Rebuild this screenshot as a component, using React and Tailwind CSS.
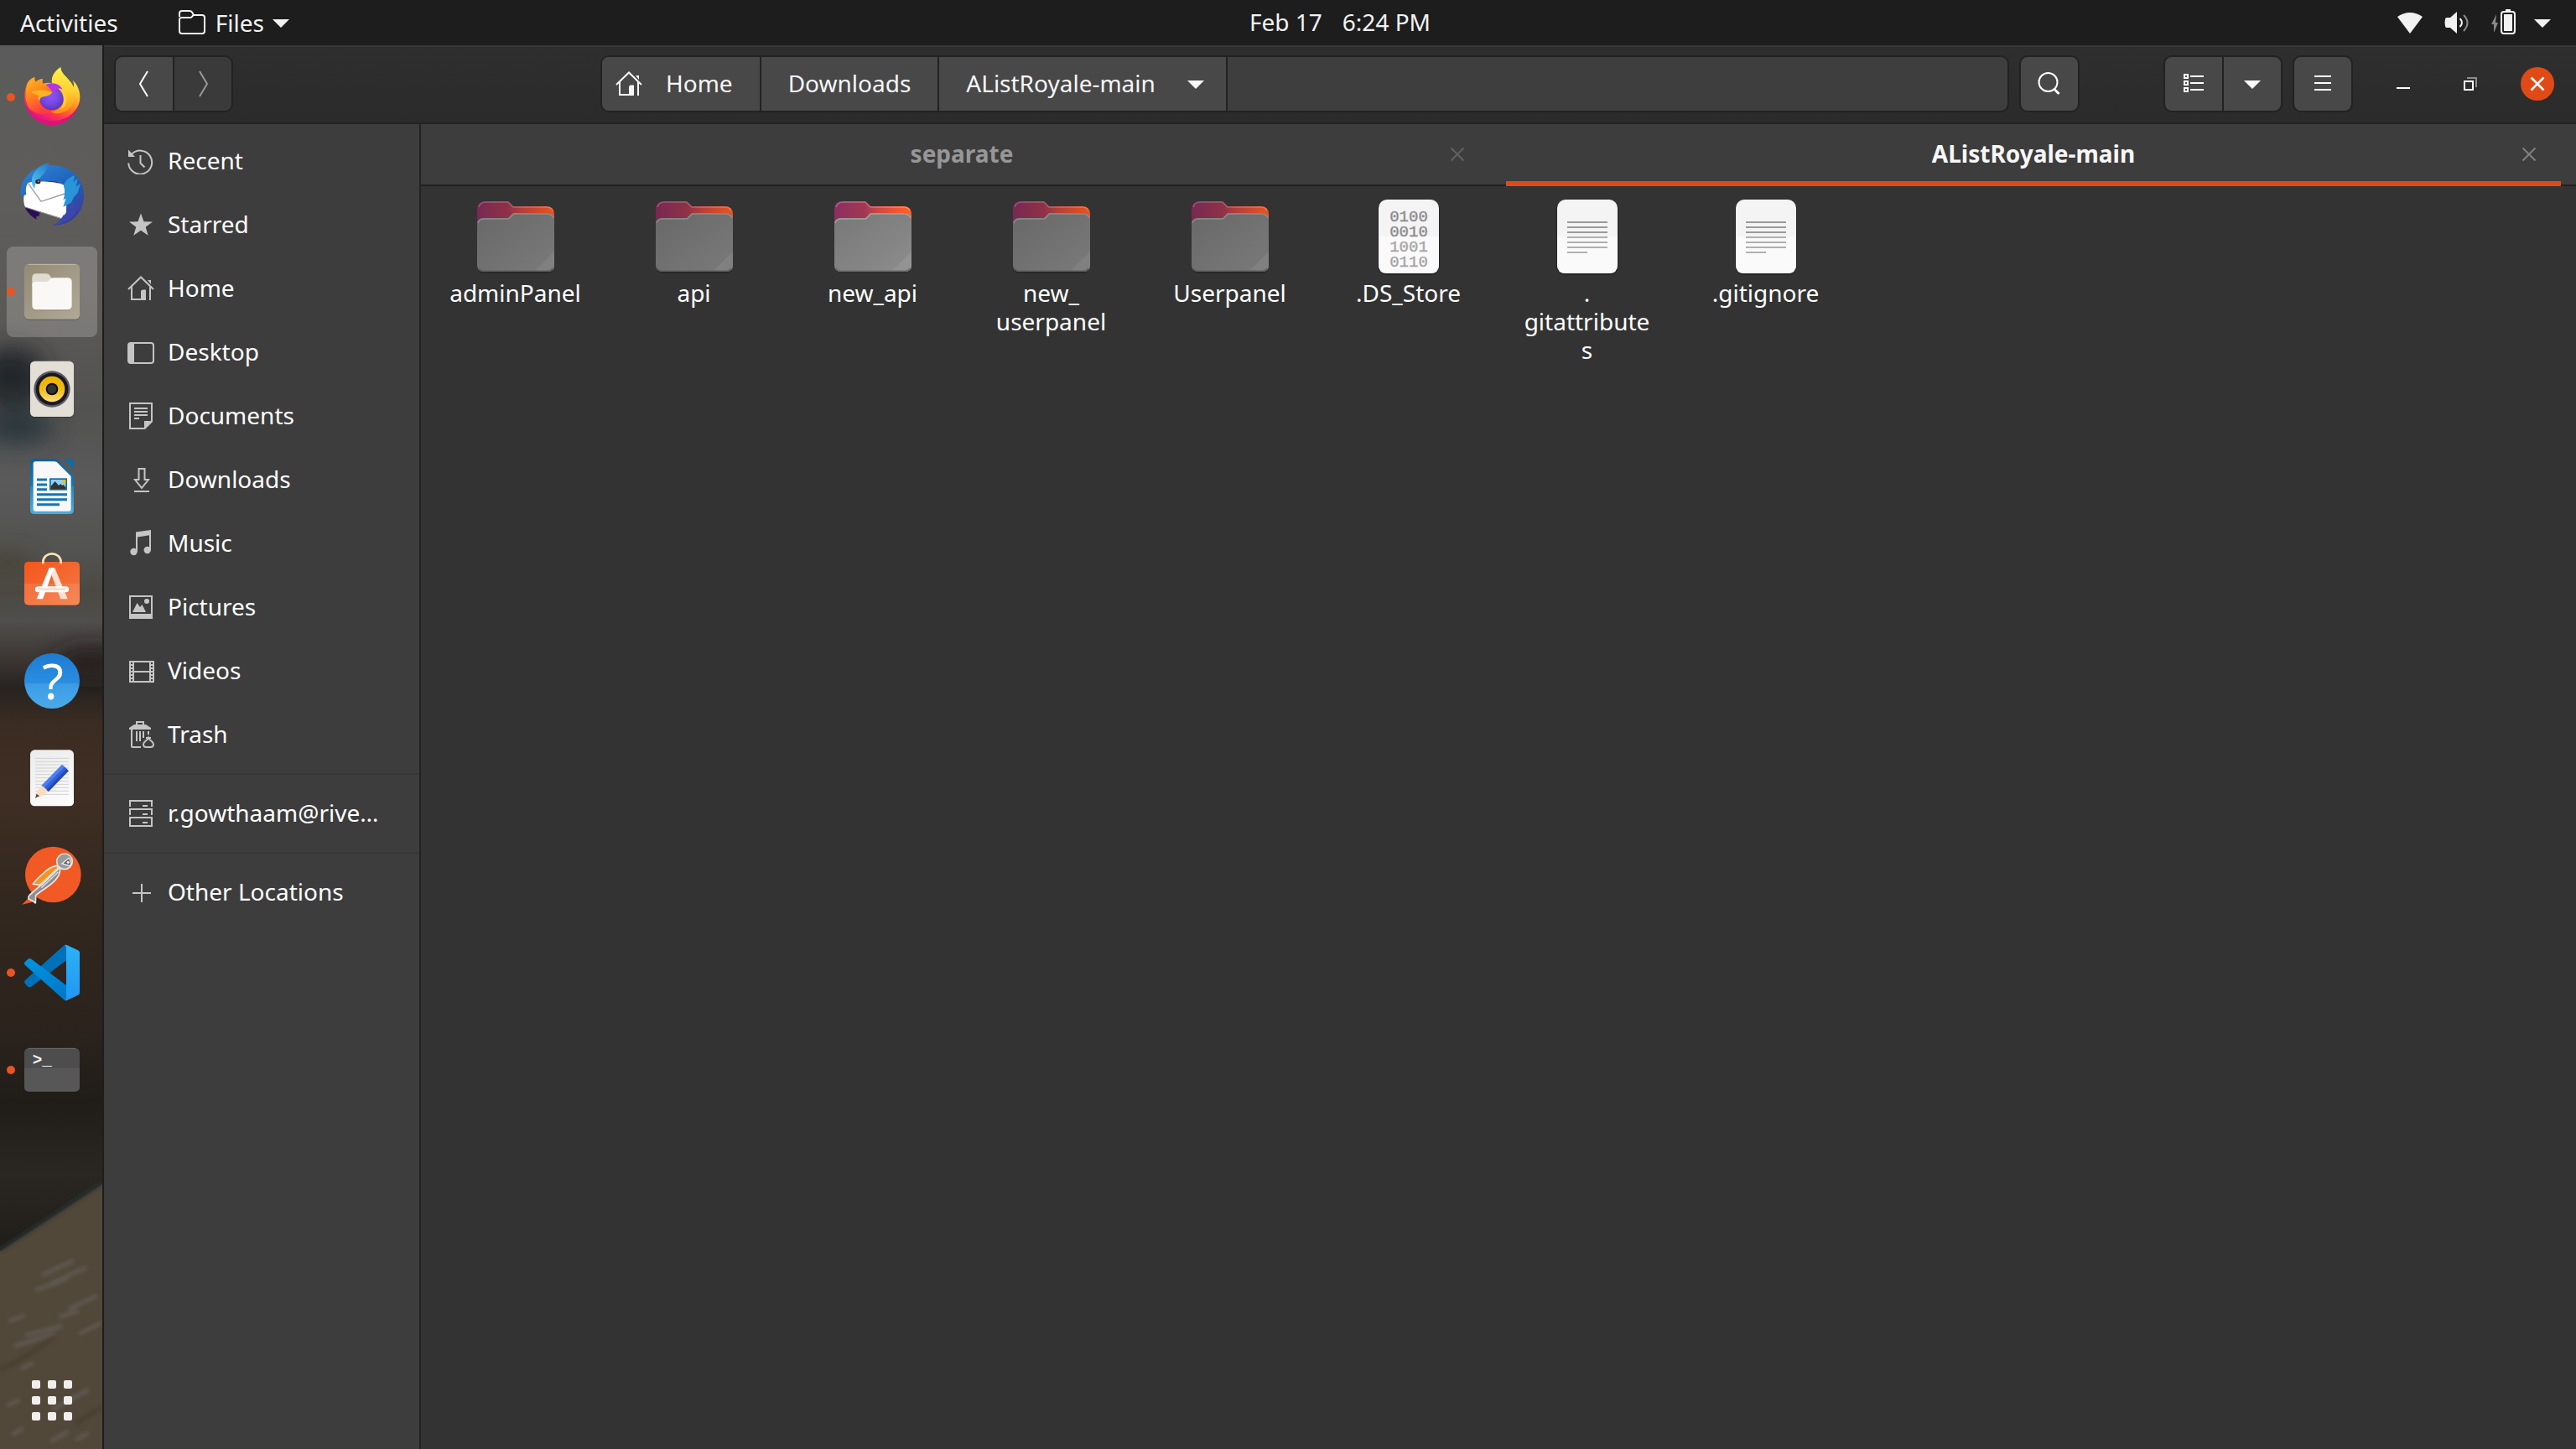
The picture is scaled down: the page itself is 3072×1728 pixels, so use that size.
import React from "react";

/* ---------- small symbolic icons (32px grid) ---------- */

function Sym({ children, className = "" }) {
  return (
    <svg viewBox="0 0 32 32" className={"size-8 shrink-0 " + className} fill="none" stroke="currentColor" strokeWidth="2" aria-hidden="true">
      {children}
    </svg>
  );
}

const HomeIcon = () => (
  <Sym>
    <path d="M1 17 16 2.500 31 17" />
    <path d="M5 14V29H17M27 13.500V30" />
    <path d="M16 30V20q0-2.500 2.500-2.500H22V30z" fill="currentColor" stroke="none" />
    <path d="M24 6h4v5z" fill="currentColor" stroke="none" />
  </Sym>
);

const Triangle = () => (
  <Sym>
    <path d="M6 12h20L16 22z" fill="currentColor" stroke="none" />
  </Sym>
);

const Cross = () => (
  <Sym>
    <path d="M8.500 8.500l15 15M23.500 8.500l-15 15" />
  </Sym>
);

const icons = {
  recent: (
    <Sym>
      <path d="M5 8A14 14 0 1 1 1.200 18.500M15.500 9v9.500l5 5" />
      <path d="M1 2.500 1 11h8z" fill="currentColor" stroke="none" />
    </Sym>
  ),
  starred: (
    <Sym>
      <path d="M16 2.500l3.500 9.700 10.500.3-8.300 6.300 3 10L16 22.800 7.300 28.800l3-10L2 12.500l10.500-.3z" fill="currentColor" stroke="none" />
    </Sym>
  ),
  home: <HomeIcon />,
  desktop: (
    <Sym>
      <rect x="1" y="5" width="30" height="24" rx="3" />
      <path d="M1 5h7v24H1z" fill="currentColor" stroke="none" />
    </Sym>
  ),
  documents: (
    <Sym>
      <path d="M29 23V1H3v30h18" />
      <path d="M20 22h10v1L21 32h-1z" fill="currentColor" stroke="none" />
      <path d="M8 7h16M8 11h16M8 15h16M8 19h6" />
    </Sym>
  ),
  downloads: (
    <Sym>
      <path d="M13.500 16V3h7v13h4.500L17 26 9 16zM8 30h18" />
    </Sym>
  ),
  music: (
    <Sym>
      <path d="M10 2.500 28 0V6L12 8.500V26h-2z" fill="currentColor" stroke="none" />
      <path d="M27 1v23" />
      <circle cx="7.500" cy="26" r="4.200" fill="currentColor" stroke="none" />
      <circle cx="23.700" cy="24" r="4.200" fill="currentColor" stroke="none" />
    </Sym>
  ),
  pictures: (
    <Sym>
      <path d="M3 3h26v22H3z" />
      <path d="M2 24h28v6H2zM6 22l5.500-11 3.500 5 2.500-3 4.500 9z" fill="currentColor" stroke="none" />
      <circle cx="23" cy="9" r="3" fill="currentColor" stroke="none" />
    </Sym>
  ),
  videos: (
    <Sym>
      <path d="M7 4v26M27 4v26M7 5h20M7 17h20M7 29h20M3 4v26M31 4v26" />
      <path d="M5 4v26M29 4v26" strokeDasharray="2 2" />
    </Sym>
  ),
  trash: (
    <Sym>
      <path d="M11 5V1h8v4M5 10v20q0 1 1 1h10M11 12v12M15 12v12M19 12v8M25 12v4M22 20h6" />
      <path d="M2 10V8l6-4h14l6 4v2z" fill="currentColor" stroke="none" />
      <path d="M25 20c-1 3-6 4-6 7.500 0 2 1.500 3.500 3.500 3.500h5c2 0 3.500-1.500 3.500-3.500 0-3.500-5-4.500-6-7.500z" />
    </Sym>
  ),
  server: (
    <Sym>
      <path d="M3 8V1h26v7M3 18v-7h26v7M3 21h26v10H3zM18 7h6M18 17h6M18 27h6" />
    </Sym>
  ),
  plus: (
    <Sym>
      <path d="M17 6v22M6 17h22" />
    </Sym>
  ),
};

/* ---------- dock artwork ---------- */

function Art({ top, children }) {
  return (
    <svg viewBox={`24 ${top} 324 324`} className="size-full" aria-hidden="true">
      {children}
    </svg>
  );
}

const Firefox = () => (
  <Art top={186}>
    <defs>
      <linearGradient id="ffBody" x1="0.85" y1="0.1" x2="0.25" y2="1">
        <stop offset="0" stopColor="#fff44f" />
        <stop offset="0.28" stopColor="#ffc52f" />
        <stop offset="0.52" stopColor="#ff7d1f" />
        <stop offset="0.76" stopColor="#ff3647" />
        <stop offset="0.95" stopColor="#e31587" />
      </linearGradient>
      <linearGradient id="ffFlame" x1="0.5" y1="0" x2="0.5" y2="1">
        <stop offset="0" stopColor="#fff04a" />
        <stop offset="0.5" stopColor="#ffd232" />
        <stop offset="1" stopColor="#ff8a16" />
      </linearGradient>
      <linearGradient id="ffHead" x1="0" y1="0" x2="0.4" y2="1">
        <stop offset="0" stopColor="#ffbd2a" />
        <stop offset="0.45" stopColor="#ff8c1a" />
        <stop offset="1" stopColor="#ff3d3d" />
      </linearGradient>
      <radialGradient id="ffGlobe" cx="0.45" cy="0.4" r="0.65">
        <stop offset="0" stopColor="#8a55f7" />
        <stop offset="0.5" stopColor="#7a48e6" />
        <stop offset="1" stopColor="#5335b2" />
      </radialGradient>
    </defs>
    <path fill="#e3107b" d="M90 370c10 45 50 78 97 78s88-35 98-84z" />
    <path fill="url(#ffBody)" d="M96 302c5-11 14-21 28-26-1 7 0 12 3 17 7-6 16-10 26-11-3 7-2 12 1 17 12-3 22-3 32-1-3-24 9-43 31-57 0 22 22 33 38 56 4 6 7 11 9 16 1-8 0-18-4-26 17 15 26 36 26 61 0 46-44 84-99 84s-100-36-100-80c0-18 3-35 9-50z" />
    <path fill="url(#ffFlame)" d="M186 298c-3-24 9-43 31-57 0 22 22 33 38 56 26 40 16 82-22 102-20 10-40 9-52 0 30-2 48-22 47-48-2-24-15-45-42-53z" />
    <circle cx="185" cy="350" r="44" fill="url(#ffGlobe)" />
    <path fill="#b833e1" d="M150 322c10-24 40-32 62-16 8 6 12 14 13 20-14-10-26-8-34 4-14-6-28-9-41-8z" />
    <path fill="#ffcc33" d="M208 317c13-4 25 8 29 24 5 22-3 44-22 52 10-12 14-28 12-43-2-14-8-25-19-33z" />
    <path fill="url(#ffHead)" d="M96 302c5-11 14-21 28-26-1 7 0 12 3 17 7-6 16-10 26-11-3 7-2 12 1 17 16 6 26 17 33 30-8 9-22 14-36 17-10 6-12 20-4 32 9 13 24 19 40 15-17 20-52 19-73 3-22-17-28-52-18-94z" />
    <path fill="#ffb424" d="M112 328c14-5 38-7 56-4 8 2 15 4 19 6-6 11-20 14-36 17-6 2-10 8-11 15-5-8-5-15-1-21-10-1-21-5-27-13z" />
  </Art>
);

const Thunderbird = () => (
  <Art top={534}>
    <defs>
      <linearGradient id="tbBody" x1="0.1" y1="0" x2="0.7" y2="1">
        <stop offset="0" stopColor="#2f86d6" />
        <stop offset="0.5" stopColor="#1f62bd" />
        <stop offset="1" stopColor="#3a3c9c" />
      </linearGradient>
      <linearGradient id="tbHead" x1="0.8" y1="0" x2="0.2" y2="1">
        <stop offset="0" stopColor="#2480cf" />
        <stop offset="1" stopColor="#55c4ee" />
      </linearGradient>
    </defs>
    <path fill="url(#tbBody)" d="M72 700c0-52 30-92 76-104 12-12 22-12 28-5 70-4 124 44 124 108 0 60-42 108-112 107 20-8 30-16 36-26l14-84z" />
    <path fill="#2a0d57" d="M88 738l56 24-6 8 8 2-16 2v11c-18-10-34-26-42-47z" />
    <path fill="#3a1c81" d="M150 656c26-14 60-10 78 10l-14 14z" />
    <path fill="#fff" d="M100 654c20-8 110-6 128 8 6 18 0 36 10 54l-1 44-16 23-131-42c-6-14-6-30-4-42l8-3c-4-18 0-32 6-42z" />
    <path fill="none" stroke="#9b9b9b" strokeWidth="4" d="M101 656l46 65 84-28" />
    <path fill="none" stroke="#8a8a8a" strokeWidth="3" d="M90 741l131 41" />
    <path fill="#2a94d8" d="M228 662c8-22 24-28 40-36l-6 26 16-14-6 30 16-12-10 34-14 16-10 20-28 14 10-32-10 8c6-18 8-36 2-54z" />
    <path fill="#3b47ab" d="M246 738l18-14 2 20 20-18c-12 44-48 78-98 80 18-6 32-22 38-36l10-3 2-18z" />
    <path fill="url(#tbHead)" d="M176 584c-8 14-8 26-22 40-12 16-28 20-30 52-12-12-14-36-4-54 12-20 30-36 56-38z" />
    <ellipse cx="136" cy="650" rx="9" ry="8" fill="#1d1a2a" />
    <circle cx="138" cy="649" r="4" fill="#a8702a" />
  </Art>
);

const FilesApp = () => (
  <Art top={882}>
    <defs>
      <linearGradient id="flBg" x1="0" y1="0" x2="1" y2="1">
        <stop offset="0" stopColor="#948b76" />
        <stop offset="1" stopColor="#b0a996" />
      </linearGradient>
    </defs>
    <rect x="87" y="947" width="198" height="198" rx="14" fill="#00000040" />
    <rect x="87" y="945" width="198" height="197" rx="14" fill="url(#flBg)" />
    <path d="M101 946h170" stroke="#c4beae" strokeWidth="3" />
    <path fill="#8a816c" opacity="0.5" d="M115 996q0-16 16-16h36q8 0 12 6l7 9h56q15 0 15 15v84q0 18-18 18h-106q-18 0-18-18z" />
    <path fill="#dfdbd0" d="M115 994q0-15 16-15h34q8 0 12 5l10 14-20 26h-52z" />
    <path fill="#f9f8f6" d="M115 1020q0-12 12-12h37q8 0 12-5l3-4q4-5 11-5h52q15 0 15 15v84q0 15-15 15H130q-15 0-15-15z" />
  </Art>
);

const Rhythmbox = () => (
  <Art top={30}>
    <defs>
      <linearGradient id="rbCone" x1="0" y1="0" x2="0" y2="1">
        <stop offset="0" stopColor="#ecb300" />
        <stop offset="0.5" stopColor="#eebc12" />
        <stop offset="1" stopColor="#fbe07a" />
      </linearGradient>
    </defs>
    <rect x="108" y="95" width="156" height="199" rx="16" fill="#00000050" />
    <rect x="108" y="92" width="156" height="199" rx="16" fill="#e3dfd6" />
    <circle cx="186" cy="192" r="65" fill="#5a5a60" />
    <circle cx="186" cy="192" r="58" fill="#1b1826" />
    <circle cx="186" cy="192" r="46" fill="url(#rbCone)" />
    <circle cx="186" cy="192" r="22" fill="#0c0c0c" />
    <circle cx="186" cy="192" r="16" fill="#333" />
  </Art>
);

const Writer = () => (
  <Art top={378}>
    <defs>
      <linearGradient id="lwBg" x1="0" y1="0" x2="0" y2="1">
        <stop offset="0" stopColor="#0f6199" />
        <stop offset="0.5" stopColor="#1679b4" />
        <stop offset="0.5" stopColor="#2488c2" />
        <stop offset="1" stopColor="#4aaede" />
      </linearGradient>
    </defs>
    <path fill="url(#lwBg)" d="M108 457q0-16 16-16h78l62 62v120q0 16-16 16H124q-16 0-16-16z" />
    <path fill="#f8f8f8" d="M119 459q0-8 8-8h68l8 2 51 51v117q0 8-8 8H127q-8 0-8-8z" />
    <path fill="#126aa4" d="M226 441h24q14 0 14 14v26z" />
    <path stroke="#0f76bb" strokeWidth="9" d="M132 516h36M132 534h36M132 551h36M132 569h108M132 587h108M132 605h81" />
    <rect x="177" y="511" width="63" height="43" fill="#0c6aa8" />
    <rect x="182" y="516" width="53" height="35" fill="#8fd0f5" />
    <path fill="#f4c01c" d="M221 516h14v13q-12 0-14-13z" />
    <path fill="#333" d="M182 551v-12l15-17 13 15 7-6 5 6 5-3 8 10v7z" />
  </Art>
);

const Software = () => (
  <Art top={726}>
    <defs>
      <linearGradient id="swBg" x1="0" y1="0" x2="1" y2="1">
        <stop offset="0" stopColor="#f4561c" />
        <stop offset="1" stopColor="#f37a44" />
      </linearGradient>
    </defs>
    <rect x="87" y="812" width="198" height="155" rx="14" fill="#00000050" />
    <rect x="87" y="810" width="198" height="155" rx="14" fill="url(#swBg)" />
    <path fill="#fff" opacity="0.1" d="M87 888h198v63q0 14-14 14H101q-14 0-14-14z" />
    <path fill="none" stroke="#fde3b0" strokeWidth="8" strokeLinecap="round" d="M154 814v-6c2-17 16-27 32-27s30 10 32 27v6" />
    <path fill="#fce2d6" d="M176 832h20l46 111h-25l-31-82z" />
    <path fill="#fff" d="M176 832h18l-41 111h-22z" />
    <path stroke="#fff" strokeWidth="21" strokeLinecap="round" d="M136 908h100" />
    <path stroke="#fcdccd" strokeWidth="8" d="M136 908h98" />
  </Art>
);

const Help = () => (
  <Art top={1074}>
    <defs>
      <linearGradient id="hpBg" x1="0" y1="0" x2="0" y2="1">
        <stop offset="0" stopColor="#1c7cd2" />
        <stop offset="0.55" stopColor="#2a8ee0" />
        <stop offset="0.55" stopColor="#3b9ce6" />
        <stop offset="1" stopColor="#4aaae9" />
      </linearGradient>
    </defs>
    <circle cx="186" cy="1236" r="99" fill="url(#hpBg)" />
    <text x="189" y="1302" textAnchor="middle" fontSize="176" fill="#fff" className="font-['Noto_Sans',sans-serif]">?</text>
  </Art>
);

const Gedit = () => (
  <Art top={222}>
    <defs>
      <linearGradient id="gdBg" x1="0" y1="0" x2="0.4" y2="1">
        <stop offset="0" stopColor="#ebebeb" />
        <stop offset="1" stopColor="#fafafa" />
      </linearGradient>
    </defs>
    <rect x="108" y="283" width="156" height="201" rx="16" fill="url(#gdBg)" />
    <path fill="#fff" d="M264 442v26q0 15-15 15h-27z" />
    <path stroke="#d2d2d2" strokeWidth="3" d="M126 313h120M126 325h120M126 336h120M126 348h120M126 359h120M126 371h120M126 383h120M126 395h120M126 406h120M126 418h120M126 430h120M126 442h120" />
    <path fill="#fbdcbf" d="M150 408l24 24-36 22-12-12z" />
    <path fill="#4c7ff0" d="M222 335l8 7-70 76-12-8z" />
    <path fill="#2f63de" d="M230 342l10 9-70 76-12-9z" />
    <path fill="#2348b8" d="M238 350l8 8-72 74-8-6z" />
    <path fill="#484848" d="M131 440l10 8-15 7z" />
  </Art>
);

const Postman = () => (
  <Art top={570}>
    <circle cx="190" cy="729" r="100" fill="#f15a24" />
    <path fill="#f15a24" d="M79 836l28-28 22 16z" />
    <path fill="#8e8e8e" stroke="#e6e6e6" strokeWidth="5" strokeLinejoin="round" d="M214 703c4 18-4 32-16 46-18 20-46 34-70 54l-1 28-10-8-14-6q-4-8 4-16l48-42z" />
    <path fill="#f7931e" stroke="#e6e6e6" strokeWidth="5" strokeLinejoin="round" d="M210 697c-14 0-28 4-42 16-20 18-40 34-50 50l30 4 56-54z" />
    <path fill="none" stroke="#e0e0e0" strokeWidth="4" d="M142 766l62-58M148 776l60-56" />
    <circle cx="231" cy="682" r="28" fill="#9a9a9a" stroke="#e2e2e2" strokeWidth="5" />
    <path fill="#5c5c5c" stroke="#f0f0f0" strokeWidth="4" d="M222 690l24-20q12 12 6 28z" />
    <circle cx="244" cy="685" r="5" fill="#f0f0f0" />
  </Art>
);

const VSCode = () => (
  <Art top={918}>
    <defs>
      <linearGradient id="vsR" x1="0" y1="0" x2="0" y2="1">
        <stop offset="0" stopColor="#2bb3f6" />
        <stop offset="1" stopColor="#2196f3" />
      </linearGradient>
      <linearGradient id="vsF" x1="0" y1="0" x2="0.4" y2="1">
        <stop offset="0" stopColor="#0095e0" />
        <stop offset="1" stopColor="#007acc" />
      </linearGradient>
    </defs>
    <path fill="#0071b8" d="M90 1107q-6 6 0 12l10 11q6 4 12 0l125-94v-56q-6 0-10 4z" />
    <path fill="url(#vsF)" d="M90 1053q-6-6 0-12l10-10q6-4 12 0l125 94v54q-6 0-10-4z" />
    <path fill="url(#vsR)" d="M233 981q2-1 6 0l40 19q6 3 6 9v142q0 6-6 9l-40 19q-4 1-6 0l4-8v-182z" />
  </Art>
);

const Terminal = () => (
  <Art top={1266}>
    <rect x="87" y="1353" width="198" height="154" rx="16" fill="#00000060" />
    <rect x="87" y="1350" width="198" height="155" rx="16" fill="#4d4d4d" />
    <path fill="#575757" d="M87 1421h198v68q0 16-16 16H103q-16 0-16-16z" />
    <path d="M101 1351h170" stroke="#6d6d6d" strokeWidth="3" />
    <text x="116" y="1410" fontSize="58" fontWeight="700" fill="#f2f2f2" className="font-['Liberation_Mono',monospace]">&gt;_</text>
  </Art>
);

const AppGrid = () => (
  <Art top={948}>
    {[1053, 1110, 1167].map((y) =>
      [129, 186, 243].map((x) => <rect key={x + "-" + y} x={x - 15} y={y - 15} width="30" height="30" rx="6" fill="#f0efed" />)
    )}
  </Art>
);

const dockApps = [
  { name: "Firefox", art: <Firefox />, running: true },
  { name: "Thunderbird Mail", art: <Thunderbird /> },
  { name: "Files", art: <FilesApp />, running: true, active: true },
  { name: "Rhythmbox", art: <Rhythmbox /> },
  { name: "LibreOffice Writer", art: <Writer /> },
  { name: "Ubuntu Software", art: <Software /> },
  { name: "Help", art: <Help /> },
  { name: "Text Editor", art: <Gedit /> },
  { name: "Postman", art: <Postman /> },
  { name: "Visual Studio Code", art: <VSCode />, running: true },
  { name: "Terminal", art: <Terminal />, running: true },
];

function DockButton({ name, art, running, active }) {
  return (
    <button type="button" aria-label={name} className={"relative size-[108px] shrink-0 rounded-lg " + (active ? "bg-white/20" : "")}>
      {art}
      {running && <span className="absolute left-0 top-[49px] size-[10px] rounded-full bg-[#e95420]" />}
    </button>
  );
}

const Wallpaper = () => (
  <svg viewBox="0 54 122 1674" preserveAspectRatio="none" className="absolute inset-0 size-full" aria-hidden="true">
    <defs>
      <linearGradient id="wall" gradientUnits="userSpaceOnUse" x1="0" y1="54" x2="0" y2="1500">
        <stop offset="0" stopColor="#5a5b5a" />
        <stop offset="0.13" stopColor="#5f5d5b" />
        <stop offset="0.22" stopColor="#5b5956" />
        <stop offset="0.3" stopColor="#525251" />
        <stop offset="0.36" stopColor="#5a5a5a" />
        <stop offset="0.42" stopColor="#525251" />
        <stop offset="0.45" stopColor="#4c4943" />
        <stop offset="0.475" stopColor="#4f4e4c" />
        <stop offset="0.505" stopColor="#3d3734" />
        <stop offset="0.53" stopColor="#272320" />
        <stop offset="0.56" stopColor="#3b2c22" />
        <stop offset="0.62" stopColor="#3f2e23" />
        <stop offset="0.7" stopColor="#33281f" />
        <stop offset="0.82" stopColor="#2a221c" />
        <stop offset="0.87" stopColor="#201d19" />
        <stop offset="0.93" stopColor="#2a2723" />
        <stop offset="1" stopColor="#1f1d18" />
      </linearGradient>
      <filter id="soft" x="-50%" y="-50%" width="200%" height="200%">
        <feGaussianBlur stdDeviation="14" />
      </filter>
      <filter id="faint" x="-50%" y="-50%" width="200%" height="200%">
        <feGaussianBlur stdDeviation="2" />
      </filter>
    </defs>
    <rect x="0" y="54" width="122" height="1674" fill="url(#wall)" />
    <g filter="url(#soft)">
      <ellipse cx="14" cy="450" rx="42" ry="36" fill="#20282a" />
      <ellipse cx="20" cy="510" rx="44" ry="18" fill="#25343b" />
      <ellipse cx="10" cy="672" rx="30" ry="12" fill="#453f2e" />
      <ellipse cx="110" cy="790" rx="46" ry="16" fill="#231f1c" />
    </g>
    <path d="M0 1492 122 1412V1728H0z" fill="#51483a" />
    <path d="M0 1491 122 1411" stroke="#2b3330" strokeWidth="4" filter="url(#faint)" />
    <g stroke="#6a6360" strokeWidth="5" strokeLinecap="round" opacity="0.6" filter="url(#faint)">
      <path d="M52 1520l34-16M62 1530l40-18M44 1538l34-12M84 1560l30-14M72 1570l20-6M12 1575l16-6M32 1592l40-10M18 1605l46-14M96 1590l24-12M26 1632l12-6M64 1680l40-22M10 1676l12-6M16 1710l10-6M62 1718l18-10M92 1716l12-6" />
    </g>
    <path d="M0 1634l30-16 36-24M90 1698l32-20" stroke="#43382b" strokeWidth="6" fill="none" opacity="0.5" filter="url(#faint)" />
  </svg>
);

/* ---------- file icons ---------- */

const FolderIcon = ({ bright }) => (
  <svg viewBox="0 0 96 96" className={"size-24 " + (bright ? "brightness-115" : "")} aria-hidden="true">
    <defs>
      <linearGradient id="fdBack" x1="0" y1="0" x2="1" y2="0">
        <stop offset="0" stopColor="#772953" />
        <stop offset="0.4" stopColor="#8f3148" />
        <stop offset="0.6" stopColor="#b84038" />
        <stop offset="1" stopColor="#e95420" />
      </linearGradient>
      <linearGradient id="fdFront" x1="0" y1="0" x2="1" y2="1">
        <stop offset="0" stopColor="#686868" />
        <stop offset="1" stopColor="#7a7a7a" />
      </linearGradient>
    </defs>
    <rect x="2" y="32" width="92" height="60" rx="8" fill="#2a2a2a" />
    <path fill="url(#fdBack)" d="M2 36V16Q2 6 11 6H39l6 6H85q9 0 9 10v20z" />
    <path fill="none" stroke="#fff" strokeOpacity="0.22" strokeWidth="1.500" d="M4 13q2-6 8-6H39l6 6H85q5 0 7 4" />
    <path fill="url(#fdFront)" d="M2 34q0-8 8-8H39l6-6H85q9 0 9 9V82q0 8-8 8H10q-8 0-8-8z" />
    <path fill="#808080" d="M94 66V82q0 8-8 8H70z" />
    <path fill="none" stroke="#8c8c8c" strokeWidth="1.500" d="M3 32q1-5 7-5H39.500l6-6H85q6 0 8 5" />
    <path fill="none" stroke="#5c5c5c" strokeWidth="1.500" d="M4 86q2 3.300 6 3.300H86q4 0 6-3.300" />
  </svg>
);

const PageIcon = ({ children }) => (
  <svg viewBox="0 0 96 96" className="size-24" aria-hidden="true">
    <rect x="11" y="5" width="74" height="89" rx="11" fill="#262626" />
    <rect x="12" y="4" width="72" height="88" rx="10" fill="#f4f4f4" />
    <path fill="#fafafa" d="M12 48h72v34q0 10-10 10H22q-10 0-10-10z" />
    {children}
  </svg>
);

const TextIcon = () => (
  <PageIcon>
    <path stroke="#9a9a9a" strokeWidth="2" d="M24 31h48M24 37h48M24 43h48" />
    <path stroke="#b0b0b0" strokeWidth="2" d="M24 49h48M24 55h48M24 61h48M24 67h24" />
  </PageIcon>
);

const BinaryIcon = () => (
  <PageIcon>
    <g fontSize="19" textAnchor="middle" strokeWidth="0.4" className="font-['Liberation_Mono',monospace]">
      <text x="48" y="30" fill="#8c8c8c" stroke="#8c8c8c">0100</text>
      <text x="48" y="48" fill="#8c8c8c" stroke="#8c8c8c">0010</text>
      <text x="48" y="66" fill="#a6a6a6" stroke="#a6a6a6">1001</text>
      <text x="48" y="84" fill="#a6a6a6" stroke="#a6a6a6">0110</text>
    </g>
  </PageIcon>
);

const files = [
  { lines: ["adminPanel"], icon: <FolderIcon /> },
  { lines: ["api"], icon: <FolderIcon /> },
  { lines: ["new_api"], icon: <FolderIcon bright /> },
  { lines: ["new_", "userpanel"], icon: <FolderIcon /> },
  { lines: ["Userpanel"], icon: <FolderIcon /> },
  { lines: [".DS_Store"], icon: <BinaryIcon /> },
  { lines: [".", "gitattribute", "s"], icon: <TextIcon /> },
  { lines: [".gitignore"], icon: <TextIcon /> },
];

/* ---------- chrome ---------- */

function TopBar() {
  return (
    <header className="flex h-[54px] shrink-0 items-center bg-[#1d1d1d] px-6 text-[#f2f2f2]">
      <div className="flex flex-1 basis-0 items-center">
        <button type="button">Activities</button>
        <button type="button" className="ml-[72px] flex items-center">
          <Sym>
            <path d="M1 9V5q0-3 3-3h9q2 0 3 1.500L18 7h10q3 0 3 3v16q0 3-3 3H4q-3 0-3-3V12q0-2 3-2h9.500q1.500 0 2.500-1.200L18 6.500" />
          </Sym>
          <span className="ml-3">Files</span>
          <span className="ml-1 text-[#f2f2f2]"><Triangle /></span>
        </button>
      </div>
      <button type="button" className="flex gap-6 pb-0.5 pl-[124px]">
        <span>Feb 17</span>
        <span>6:24 PM</span>
      </button>
      <div className="flex flex-1 basis-0 justify-end">
        <button type="button" aria-label="System menu" className="flex items-center gap-6">
          <Sym>
            <path d="M1 9Q16-1 31 9L16 29z" fill="currentColor" stroke="none" />
          </Sym>
          <Sym>
            <path d="M2 12q0-2 2-2h4l8-7v26l-8-7H4q-2 0-2-2-1-4 0-8z" fill="currentColor" stroke="none" />
            <path d="M19.500 11q5 5 0 10" />
            <path d="M24 7q9 9 0 19" stroke="#8a8a8a" />
          </Sym>
          <span className="flex items-center">
            <Sym>
              <path d="M7 6 1 18h3L4 28 9 16H6z" fill="#8a8a8a" stroke="none" />
              <rect x="13" y="3" width="16" height="26" rx="3" />
              <path d="M18 0h6v3h-6zM16 6h10v20H16z" fill="currentColor" stroke="none" />
            </Sym>
            <span className="ml-[14px]"><Triangle /></span>
          </span>
        </button>
      </div>
    </header>
  );
}

const box = "border-2 border-[#222222] bg-[#484848] text-white";
const center = "flex items-center justify-center";

function HeaderBar() {
  return (
    <div className="flex h-[94px] shrink-0 items-start border-y-2 border-t-[#383838] border-b-[#222222] bg-linear-to-b from-[#2e2e2e] to-[#2b2b2b] pt-[10px] pr-[26px] pl-3">
      <div className="mr-[438px] flex h-[68px] shrink-0">
        <button type="button" aria-label="Back" className={"w-[72px] rounded-l-[10px] " + center + " " + box}>
          <Sym><path d="M20 1 11 16l9 15" /></Sym>
        </button>
        <button type="button" aria-label="Forward" disabled className={"w-[70px] rounded-r-[10px] border-2 border-l-0 border-[#222222] bg-[#3a3a3a] text-[#999999] " + center}>
          <Sym><path d="M12 1l9 15-9 15" /></Sym>
        </button>
      </div>

      <nav aria-label="Path" className="flex h-[68px] min-w-0 flex-1 overflow-hidden rounded-[10px] border-2 border-[#222222] bg-[#3e3e3e] text-[#f7f7f7]">
        <button type="button" className="flex items-center gap-7 border-r-2 border-[#222222] bg-[#484848] pr-8 pl-4">
          <HomeIcon />
          <span className="pb-0.5">Home</span>
        </button>
        <button type="button" className="border-r-2 border-[#222222] bg-[#484848] px-8 pb-0.5">Downloads</button>
        <button type="button" className="flex items-center gap-8 border-r-2 border-[#222222] bg-[#484848] pr-5 pl-8">
          <span className="pb-0.5">AListRoyale-main</span>
          <Triangle />
        </button>
      </nav>

      <button type="button" aria-label="Search" className={"ml-3 h-[68px] w-[72px] shrink-0 rounded-[10px] " + center + " " + box}>
        <Sym>
          <circle cx="14.500" cy="14" r="11" />
          <path d="M21.500 22l6 6" strokeWidth="3" />
        </Sym>
      </button>

      <div className="ml-[100px] flex h-[68px] shrink-0">
        <button type="button" aria-label="List view" className={"w-[72px] rounded-l-[10px] " + center + " " + box}>
          <Sym>
            <path d="M5 5h4v4H5zM5 13h4v4H5zM5 21h4v4H5zM12 7h16M12 15h16M12 23h16" />
          </Sym>
        </button>
        <button type="button" aria-label="View options" className={"w-[70px] rounded-r-[10px] border-l-0 " + center + " " + box}>
          <Triangle />
        </button>
      </div>
      <button type="button" aria-label="Menu" className={"ml-3 h-[68px] w-[72px] shrink-0 rounded-[10px] " + center + " " + box}>
        <Sym><path d="M6 7h20M6 15h20M6 23h20" /></Sym>
      </button>

      <div className="ml-10 flex h-[68px] shrink-0 items-center gap-10 text-white">
        <button type="button" aria-label="Minimize" className={"size-10 " + center}>
          <Sym><path d="M8 21h16" /></Sym>
        </button>
        <button type="button" aria-label="Restore" className={"size-10 " + center}>
          <Sym>
            <path d="M9 13h10v10H9z" />
            <path d="M12 9h11v11" stroke="#8c8c8c" />
          </Sym>
        </button>
        <button type="button" aria-label="Close" className={"size-10 rounded-full bg-[#e04a16] " + center}>
          <Sym><path d="M8.500 8.500l15 15M23.500 8.500l-15 15" strokeWidth="2.500" /></Sym>
        </button>
      </div>
    </div>
  );
}

const places = [
  ["recent", "Recent"],
  ["starred", "Starred"],
  ["home", "Home"],
  ["desktop", "Desktop"],
  ["documents", "Documents"],
  ["downloads", "Downloads"],
  ["music", "Music"],
  ["pictures", "Pictures"],
  ["videos", "Videos"],
  ["trash", "Trash"],
];

function Place({ icon, label }) {
  return (
    <button type="button" className="flex h-[76px] w-full shrink-0 items-center gap-4 px-7 text-left text-white">
      <span className="text-[#c5c5c5]">{icons[icon]}</span>
      <span className="pb-0.5 whitespace-nowrap">{label}</span>
    </button>
  );
}

function Sidebar() {
  return (
    <aside className="flex w-[378px] shrink-0 flex-col border-r-2 border-[#222222] bg-[#3d3d3d] pt-[6px]">
      {places.map(([icon, label]) => (
        <Place key={icon} icon={icon} label={label} />
      ))}
      <hr className="my-2 border-t-2 border-[#373737]" />
      <Place icon="server" label="r.gowthaam@rive…" />
      <hr className="my-2 border-t-2 border-[#373737]" />
      <Place icon="plus" label="Other Locations" />
    </aside>
  );
}

function Tab({ label, active }) {
  return (
    <div className="relative grid flex-1 grid-cols-[54px_1fr_54px] items-center">
      <button type="button" role="tab" aria-selected={!!active} className={"col-start-2 h-full pb-0.5 font-bold " + (active ? "text-[#f7f7f7]" : "text-[#979797]")}>
        {label}
      </button>
      <button type="button" aria-label={"Close " + label} className={active ? "text-[#808080]" : "text-[#606060]"}>
        <Cross />
      </button>
      {active && <span className="absolute inset-x-0 -bottom-[2px] h-[6px] bg-[#e04a16]" />}
    </div>
  );
}

export default function App() {
  return (
    <div className="flex min-h-screen flex-col bg-[#333333] font-['Noto_Sans',sans-serif] text-[28px] leading-[34px]">
      <TopBar />
      <div className="flex flex-1">
        <aside className="relative flex w-[124px] shrink-0 flex-col gap-2 border-r-2 border-[#1d1d1d] bg-[#333333] px-2 pt-2 pb-1">
          <Wallpaper />
          {dockApps.map((app) => (
            <DockButton key={app.name} {...app} />
          ))}
          <div className="mt-auto flex">
            <DockButton name="Show Applications" art={<AppGrid />} />
          </div>
        </aside>
        <div className="flex min-w-0 flex-1 flex-col">
          <HeaderBar />
          <div className="flex flex-1">
            <Sidebar />
            <section className="flex min-w-0 flex-1 flex-col">
              <div role="tablist" className="flex h-[74px] shrink-0 gap-5 border-b-2 border-[#212121] bg-[#3d3d3d] pr-[18px] pl-4">
                <Tab label="separate" />
                <Tab label="AListRoyale-main" active />
              </div>
              <main className="flex flex-wrap px-[6px] pt-3">
                {files.map((file) => (
                  <button type="button" key={file.lines.join("")} className="flex w-[213px] flex-col items-center gap-[2px] text-white">
                    {file.icon}
                    <span>
                      {file.lines.map((line) => (
                        <span key={line} className="block">{line}</span>
                      ))}
                    </span>
                  </button>
                ))}
              </main>
            </section>
          </div>
        </div>
      </div>
    </div>
  );
}
